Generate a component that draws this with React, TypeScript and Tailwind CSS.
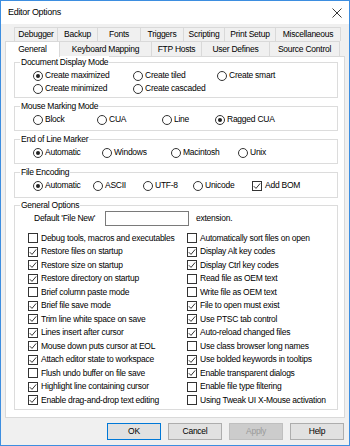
import React from 'react';

type Opt = { label: string; on?: boolean; w?: number };

const Radio: React.FC<Opt> = ({ label, on, w }) => (
  <div className="flex items-center h-[13px]" style={w ? { width: w } : undefined}>
    <span className="w-[10px] h-[10px] rounded-full border border-[#333] bg-white flex items-center justify-center shrink-0">
      {on && <span className="w-[4px] h-[4px] rounded-full bg-[#222]" />}
    </span>
    <span className="ml-[2px] whitespace-nowrap">{label}</span>
  </div>
);

const Check: React.FC<Opt> = ({ label, on }) => (
  <div className="flex items-center h-[13.5px]">
    <span className="w-[10px] h-[10px] border border-[#333] bg-white shrink-0 flex items-center justify-center">
      {on && (
        <svg width="8" height="8" viewBox="0 0 8 8">
          <path d="M0.8 4.2 L3 6.4 L7.2 1.4" fill="none" stroke="#333" strokeWidth="1" />
        </svg>
      )}
    </span>
    <span className="ml-[3px] whitespace-nowrap">{label}</span>
  </div>
);

const Group: React.FC<{ title: string; className?: string; children: React.ReactNode }> = ({ title, className, children }) => (
  <div className={`relative border border-[#dcdcdc] ${className ?? ''}`}>
    <span className="absolute left-[5px] -top-[7px] bg-white px-[1px] leading-[12px] whitespace-nowrap">{title}</span>
    {children}
  </div>
);

const row1 = [
  ['Debugger', 43],
  ['Backup', 40],
  ['Fonts', 43],
  ['Triggers', 43],
  ['Scripting', 41],
  ['Print Setup', 51],
  ['Miscellaneous', 66],
] as const;

const row2 = [
  ['Keyboard Mapping', 92],
  ['FTP Hosts', 50],
  ['User Defines', 68],
  ['Source Control', 70],
] as const;

const left: Opt[] = [
  { label: 'Debug tools, macros and executables' },
  { label: 'Restore files on startup', on: true },
  { label: 'Restore size on startup', on: true },
  { label: 'Restore directory on startup', on: true },
  { label: 'Brief column paste mode' },
  { label: 'Brief file save mode', on: true },
  { label: 'Trim line white space on save', on: true },
  { label: 'Lines insert after cursor', on: true },
  { label: 'Mouse down puts cursor at EOL', on: true },
  { label: 'Attach editor state to workspace', on: true },
  { label: 'Flush undo buffer on file save' },
  { label: 'Highlight line containing cursor', on: true },
  { label: 'Enable drag-and-drop text editing', on: true },
];

const right: Opt[] = [
  { label: 'Automatically sort files on open' },
  { label: 'Display Alt key codes', on: true },
  { label: 'Display Ctrl key codes', on: true },
  { label: 'Read file as OEM text' },
  { label: 'Write file as OEM text' },
  { label: 'File to open must exist', on: true },
  { label: 'Use PTSC tab control', on: true },
  { label: 'Auto-reload changed files', on: true },
  { label: 'Use class browser long names' },
  { label: 'Use bolded keywords in tooltips', on: true },
  { label: 'Enable transparent dialogs', on: true },
  { label: 'Enable file type filtering' },
  { label: 'Using Tweak UI X-Mouse activation' },
];

export default function App() {
  return (
    <div className="w-[350px] h-[446px] border border-[#3d8ee0] bg-[#f0f0f0] flex flex-col text-black text-[8.5px] tracking-[-0.25px] font-['Liberation_Sans',Arial,sans-serif] overflow-hidden">
      {/* Title bar */}
      <div className="h-[23px] bg-white flex items-center justify-between pl-[7px] pr-[7px] shrink-0">
        <span className="text-[9px] tracking-[-0.3px]">Editor Options</span>
        <svg width="10" height="10" viewBox="0 0 10 10">
          <path d="M0.5 0.5 L9.5 9.5 M9.5 0.5 L0.5 9.5" stroke="#222" strokeWidth="0.9" />
        </svg>
      </div>

      {/* Tabs */}
      <div className="pl-[4px] pt-[3px]">
        <div className="flex ml-[9px] h-[14px]">
          {row1.map(([t, w]) => (
            <div
              key={t}
              style={{ width: w }}
              className="border border-r-0 last:border-r border-b-0 border-[#d9d9d9] bg-[#f0f0f0] flex items-center justify-center whitespace-nowrap"
            >
              {t}
            </div>
          ))}
        </div>
        <div className="flex h-[15px]">
          <div className="relative z-10 w-[55px] h-[16px] bg-white border border-b-0 border-[#d9d9d9] flex items-center justify-center pb-[1px]">
            General
          </div>
          {row2.map(([t, w]) => (
            <div
              key={t}
              style={{ width: w }}
              className="border border-l-0 border-b-0 border-[#d9d9d9] bg-[#f0f0f0] flex items-center justify-center whitespace-nowrap"
            >
              {t}
            </div>
          ))}
        </div>
      </div>

      {/* Panel */}
      <div className="ml-[4px] w-[340px] h-[362px] bg-white border border-[#d9d9d9] pl-[8px] pr-[6px] pt-[5px]">
        <Group title="Document Display Mode" className="pt-[6px] pb-[2px] pl-[18px]">
          <div className="flex">
            <Radio label="Create maximized" on w={100} />
            <Radio label="Create tiled" w={84} />
            <Radio label="Create smart" />
          </div>
          <div className="flex">
            <Radio label="Create minimized" w={100} />
            <Radio label="Create cascaded" />
          </div>
        </Group>

        <Group title="Mouse Marking Mode" className="mt-[8px] pt-[6px] pb-[4px] pl-[18px]">
          <div className="flex">
            <Radio label="Block" w={64} />
            <Radio label="CUA" w={65} />
            <Radio label="Line" w={53} />
            <Radio label="Ragged CUA" on />
          </div>
        </Group>

        <Group title="End of Line Marker" className="mt-[8px] pt-[6px] pb-[4px] pl-[18px]">
          <div className="flex">
            <Radio label="Automatic" on w={69} />
            <Radio label="Windows" w={69} />
            <Radio label="Macintosh" w={67} />
            <Radio label="Unix" />
          </div>
        </Group>

        <Group title="File Encoding" className="mt-[8px] pt-[6px] pb-[4px] pl-[18px]">
          <div className="flex">
            <Radio label="Automatic" on w={60} />
            <Radio label="ASCII" w={50} />
            <Radio label="UTF-8" w={50} />
            <Radio label="Unicode" w={59} />
            <Check label="Add BOM" on />
          </div>
        </Group>

        <Group title="General Options" className="mt-[7px] pt-[5px] pb-[2px] pl-[13px]">
          <div className="flex items-center h-[15px]">
            <span className="ml-[6px] w-[71px] whitespace-nowrap">Default 'File New'</span>
            <div className="w-[84px] h-[15px] border border-[#7a7a7a] bg-white" />
            <span className="ml-[7px]">extension.</span>
          </div>
          <div className="flex mt-[6px]">
            <div className="w-[159px]">
              {left.map((o) => (
                <Check key={o.label} {...o} />
              ))}
            </div>
            <div>
              {right.map((o) => (
                <Check key={o.label} {...o} />
              ))}
            </div>
          </div>
        </Group>
      </div>

      {/* Buttons */}
      <div className="flex justify-end gap-[7px] pr-[5px] mt-[5px]">
        <button className="w-[54px] h-[17px] border border-[#0078d7] bg-[#e1e1e1]">OK</button>
        <button className="w-[54px] h-[17px] border border-[#adadad] bg-[#e1e1e1]">Cancel</button>
        <button className="w-[54px] h-[17px] border border-[#bfbfbf] bg-[#cccccc] text-[#9a9a9a]">Apply</button>
        <button className="w-[54px] h-[17px] border border-[#adadad] bg-[#e1e1e1]">Help</button>
      </div>
    </div>
  );
}
